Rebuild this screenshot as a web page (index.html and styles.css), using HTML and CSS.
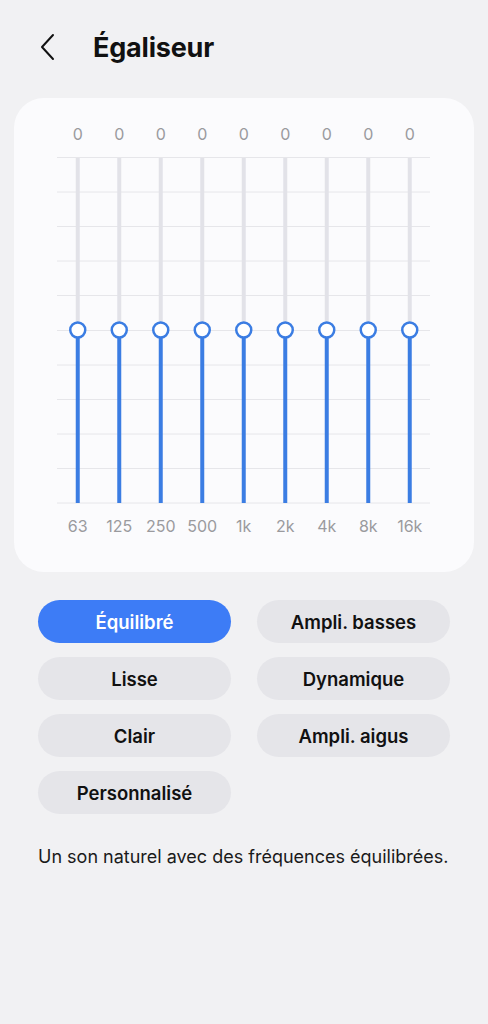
FILE: index.html
```html
<!DOCTYPE html>
<html lang="fr">
<head>
    <meta charset="UTF-8">
    <meta name="viewport" content="width=device-width, initial-scale=1.0">
    <title>Égaliseur</title>
    <link rel="stylesheet" href="styles.css">
</head>
<body>
    <header class="top-bar">
        <button class="back-btn" aria-label="Retour">
            <svg width="18" height="28" viewBox="0 0 18 28">
                <path d="M14 2 L3 14 L14 26" fill="none" stroke="#111" stroke-width="2" stroke-linecap="round" stroke-linejoin="round"/>
            </svg>
        </button>
        <h1>Égaliseur</h1>
    </header>

    <!-- equalizer card -->
    <section class="eq-card">
        <div class="eq-values">
            <span>0</span><span>0</span><span>0</span><span>0</span><span>0</span><span>0</span><span>0</span><span>0</span><span>0</span>
        </div>
        <svg class="eq-graph" width="373" height="348" viewBox="0 0 373 348">
            <g stroke="#e6e6ea" stroke-width="1">
                <line x1="0" y1="1.5" x2="373" y2="1.5"/>
                <line x1="0" y1="36" x2="373" y2="36"/>
                <line x1="0" y1="70.5" x2="373" y2="70.5"/>
                <line x1="0" y1="105" x2="373" y2="105"/>
                <line x1="0" y1="139.5" x2="373" y2="139.5"/>
                <line x1="0" y1="174.5" x2="373" y2="174.5"/>
                <line x1="0" y1="209" x2="373" y2="209"/>
                <line x1="0" y1="243.5" x2="373" y2="243.5"/>
                <line x1="0" y1="278" x2="373" y2="278"/>
                <line x1="0" y1="312.5" x2="373" y2="312.5"/>
                <line x1="0" y1="347" x2="373" y2="347"/>
            </g>
            <g id="bands"></g>
        </svg>
        <div class="eq-freqs">
            <span>63</span><span>125</span><span>250</span><span>500</span><span>1k</span><span>2k</span><span>4k</span><span>8k</span><span>16k</span>
        </div>
    </section>

    <div class="presets">
        <button class="preset active">Équilibré</button>
        <button class="preset">Ampli. basses</button>
        <button class="preset">Lisse</button>
        <button class="preset">Dynamique</button>
        <button class="preset">Clair</button>
        <button class="preset">Ampli. aigus</button>
        <button class="preset">Personnalisé</button>
    </div>

    <p class="description">Un son naturel avec des fréquences équilibrées.</p>

    <script>
        // draw the 9 band sliders
        const bands = document.getElementById('bands');
        const ns = 'http://www.w3.org/2000/svg';
        for (let i = 0; i < 9; i++) {
            const x = 20.75 + i * 41.5;
            const track = document.createElementNS(ns, 'line');
            track.setAttribute('x1', x); track.setAttribute('x2', x);
            track.setAttribute('y1', 2); track.setAttribute('y2', 174);
            track.setAttribute('stroke', '#e2e2e8'); track.setAttribute('stroke-width', 4);
            bands.appendChild(track);

            const fill = document.createElementNS(ns, 'line');
            fill.setAttribute('x1', x); fill.setAttribute('x2', x);
            fill.setAttribute('y1', 174); fill.setAttribute('y2', 347);
            fill.setAttribute('stroke', '#3b7de3'); fill.setAttribute('stroke-width', 4);
            bands.appendChild(fill);

            const knob = document.createElementNS(ns, 'circle');
            knob.setAttribute('cx', x); knob.setAttribute('cy', 174);
            knob.setAttribute('r', 7.5);
            knob.setAttribute('fill', '#fff'); knob.setAttribute('stroke', '#3b7de3');
            knob.setAttribute('stroke-width', 2.5);
            bands.appendChild(knob);
        }
    </script>
</body>
</html>
```

FILE: styles.css
```css
* {
    margin: 0;
    padding: 0;
    box-sizing: border-box;
}

body {
    font-family: Inter, Roboto, sans-serif;
    background-color: #f1f1f3;
    width: 488px;
    height: 1024px;
    color: #111;
}

.top-bar {
    height: 98px;
    display: flex;
    align-items: center;
    padding-left: 38px;
    padding-bottom: 4px;
}

.back-btn {
    background: none;
    border: none;
    width: 20px;
    height: 30px;
    display: flex;
    align-items: center;
    justify-content: center;
    margin-right: 35px;
}

.top-bar h1 {
    font-size: 27px;
    font-weight: 700;
    color: #111;
    letter-spacing: -0.2px;
}

.eq-card {
    margin: 0 14px;
    background: #fbfbfd;
    border-radius: 30px;
    padding: 26px 44px 36px 43px;
}

.eq-values,
.eq-freqs {
    display: grid;
    grid-template-columns: repeat(9, 41.5px);
    text-align: center;
    font-size: 16px;
    line-height: 20px;
    color: #9a9a9e;
}

.eq-values {
    margin-bottom: 12px;
}

.eq-graph {
    display: block;
}

.eq-freqs {
    margin-top: 12px;
}

.presets {
    display: grid;
    grid-template-columns: 193px 193px;
    column-gap: 26px;
    row-gap: 14px;
    padding: 28px 38px 0;
}

.preset {
    height: 43px;
    border: none;
    border-radius: 22px;
    background: #e5e5e9;
    font-family: Inter, Roboto, sans-serif;
    font-size: 18.5px;
    font-weight: 600;
    color: #111;
}

.preset.active {
    background: #3d7cf6;
    color: #fff;
}

.description {
    padding: 32px 38px 0;
    font-size: 18px;
    color: #1a1a1a;
}
```
